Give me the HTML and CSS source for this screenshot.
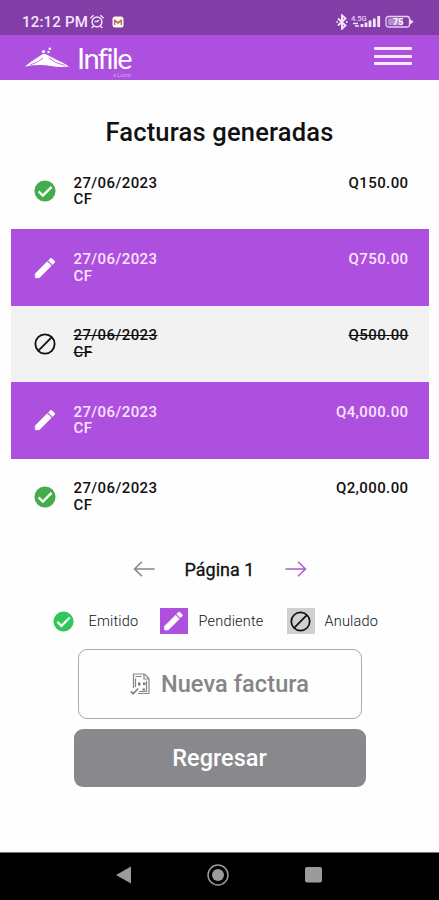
FILE: index.html
```html
<!DOCTYPE html>
<html lang="es">
<head>
    <meta charset="UTF-8">
    <meta name="viewport" content="width=device-width, initial-scale=1.0">
    <title>Facturas generadas</title>
    <link rel="stylesheet" href="styles.css">
</head>
<body>
    <!-- Shared icons -->
    <svg class="sprite" width="0" height="0">
        <symbol id="check" viewBox="0 0 24 24">
            <circle cx="12" cy="12" r="11.5" fill="currentColor"/>
            <path d="M5 12.4l4.7 4.6L19.2 7.5" fill="none" stroke="#fff" stroke-width="2.5"/>
        </symbol>
        <symbol id="pencil" viewBox="0 0 24 24">
            <path d="M3 17.25V21h3.75L17.81 9.94l-3.75-3.75L3 17.25zM20.71 7.04a1 1 0 0 0 0-1.41l-2.34-2.34a1 1 0 0 0-1.41 0l-1.83 1.83 3.75 3.75 1.83-1.83z" fill="currentColor" stroke="currentColor" stroke-width=".6"/>
        </symbol>
        <symbol id="ban" viewBox="0 0 24 24">
            <circle cx="12" cy="12" r="10.5" fill="none" stroke="currentColor" stroke-width="2"/>
            <path d="M4.8 19.2L19.2 4.8" stroke="currentColor" stroke-width="2"/>
        </symbol>
    </svg>

    <div class="status-bar">
        <span class="time">12:12 PM</span>
        <svg class="alarm" viewBox="0 0 16 16" width="16" height="15">
            <g fill="none" stroke="#f3e4fa" stroke-width="1.6">
                <circle cx="8" cy="8.5" r="5.2"/>
                <path d="M1 4.5L4.3 1.3M15 4.5L11.7 1.3M5.5 8h2.6l2-1.3M4 13l-1.5 2M12 13l1.5 2"/>
            </g>
        </svg>
        <svg class="mail" viewBox="0 0 12 12" width="12" height="12">
            <rect x=".5" y=".5" width="11" height="11" rx="2.5" fill="#fff5ee"/>
            <path d="M2.7 9V4" stroke="#5b8bd6" stroke-width="1.4"/>
            <path d="M9.3 9V4" stroke="#5aa564" stroke-width="1.4"/>
            <path d="M2.2 4L6 7l3.8-3" fill="none" stroke="#dc5a3c" stroke-width="1.6"/>
        </svg>
        <div class="status-right">
            <svg viewBox="0 0 12 16" width="12" height="16">
                <path d="M2 4.5l7.5 7L6 14.7V1.3l3.5 3.2L2 11.5M.5 8h1.3M10 8h1.5" fill="none" stroke="#f3e4fa" stroke-width="1.9"/>
            </svg>
            <svg class="signal" viewBox="0 0 30 15" width="30" height="15">
                <text x="0" y="6.5" class="network">4.5G</text>
                <path d="M2 9.5h5M4 12h4" stroke="#f3e4fa" stroke-width="1.5"/>
                <path d="M11 13v-3M15 13V8.5M19 13V6.5M23.3 13V4.5M27.7 13V2" stroke="#f3e4fa" stroke-width="2.8"/>
            </svg>
            <svg class="battery" viewBox="0 0 29 14" width="29" height="14">
                <rect x="1" y="1.5" width="23.5" height="10.5" rx="2.5" fill="none" stroke="#e9cff5" stroke-width="1.3"/>
                <rect x="3" y="3.3" width="15" height="7" rx="1" fill="#b98ad0"/>
                <path d="M25 4l3.5 2.8L25 9.6z" fill="#f3e4fa"/>
                <text x="8" y="10" class="level">75</text>
            </svg>
        </div>
    </div>

    <header class="navbar">
        <svg class="mountain" viewBox="0 0 44 21" width="44" height="21">
            <path d="M0 19.5Q5 15 11 11.5L17 7.5Q19 6.3 21 7.3L31 12.5Q39 16 44 19.5Q34 20.5 26 19Q14 17 0 19.5z" fill="#fff"/>
            <path d="M5 18Q14 15 18 11M24 11Q30 16.5 40 18.5" fill="none" stroke="#ae50df" stroke-width=".8"/>
            <circle cx="18.5" cy="4.5" r="1.6" fill="#fff"/>
            <circle cx="24.8" cy="1.8" r="1.3" fill="#fff"/>
            <circle cx="23.5" cy="5" r="1.2" fill="#fff"/>
        </svg>
        <div class="brand">
            <span class="brand-name">Infile</span>
            <span class="brand-sub">x Lucro</span>
        </div>
        <div class="menu">
            <span></span>
            <span></span>
            <span></span>
        </div>
    </header>

    <main>
        <h1>Facturas generadas</h1>

        <div class="list">
            <div class="row issued">
                <svg><use href="#check"/></svg>
                <div class="info">27/06/2023<br>CF</div>
                <div class="amount">Q150.00</div>
            </div>
            <div class="row pending">
                <svg><use href="#pencil"/></svg>
                <div class="info">27/06/2023<br>CF</div>
                <div class="amount">Q750.00</div>
            </div>
            <div class="row void">
                <svg><use href="#ban"/></svg>
                <div class="info">27/06/2023<br>CF</div>
                <div class="amount">Q500.00</div>
            </div>
            <div class="row pending">
                <svg><use href="#pencil"/></svg>
                <div class="info">27/06/2023<br>CF</div>
                <div class="amount">Q4,000.00</div>
            </div>
            <div class="row issued">
                <svg><use href="#check"/></svg>
                <div class="info">27/06/2023<br>CF</div>
                <div class="amount">Q2,000.00</div>
            </div>
        </div>

        <div class="pager">
            <svg class="prev" viewBox="0 0 22 16" width="22" height="16">
                <path d="M21.5 8H1.5M9 .8L1.5 8L9 15.2"/>
            </svg>
            <span>Página 1</span>
            <svg class="next" viewBox="0 0 22 16" width="22" height="16">
                <path d="M.5 8h20M13 .8L20.5 8L13 15.2"/>
            </svg>
        </div>

        <div class="legend">
            <div class="key key-issued"><svg><use href="#check"/></svg></div>
            <span class="emitido">Emitido</span>
            <div class="key key-pending"><svg><use href="#pencil"/></svg></div>
            <span class="pendiente">Pendiente</span>
            <div class="key key-void"><svg><use href="#ban"/></svg></div>
            <span class="anulado">Anulado</span>
        </div>

        <button class="btn new">
            <svg viewBox="0 0 20 22" width="20" height="22">
                <g fill="none" stroke="#858585" stroke-width="1.2">
                    <path d="M3.5 15V1h11l4.5 4.5V20.5H8"/>
                    <path d="M14 1v5h5M5.5 3.5h6M5.5 14V5.5M16.5 8v10.5H9"/>
                    <path d="M.8 18.3l2.4 2.4 5-5.2" stroke-width="1.7"/>
                </g>
                <path d="M8 9.5h2.5v3H8zM13 9.5h2.5V12H13zM12.5 15.5H15v2h-2.5z" fill="#777"/>
            </svg>
            <span>Nueva factura</span>
        </button>
        <button class="btn back"><span>Regresar</span></button>
    </main>

    <footer class="nav-keys">
        <svg viewBox="0 0 15 18" width="15" height="18"><path d="M0 9L15 .5v17z" fill="#9b9b9b"/></svg>
        <svg viewBox="0 0 22 22" width="22" height="22">
            <circle cx="11" cy="11" r="10" fill="none" stroke="#9b9b9b" stroke-width="1.5"/>
            <circle cx="11" cy="11" r="6" fill="#9b9b9b"/>
        </svg>
        <svg viewBox="0 0 17 16" width="17" height="16"><rect width="17" height="15.5" rx="2" fill="#9b9b9b"/></svg>
    </footer>
</body>
</html>
```
FILE: styles.css
```css
* {
    box-sizing: border-box;
}

body {
    margin: 0;
    height: 900px;
    display: flex;
    flex-direction: column;
    overflow: hidden;
    background: #fefefe;
    color: #111;
    font-family: Roboto, sans-serif;
}

svg {
    display: block;
    flex: none;
}

.sprite {
    position: absolute;
}

/* Phone status bar */
.status-bar {
    height: 35px;
    padding: 8px 25px 0 22px;
    display: flex;
    align-items: center;
    background: #833da7;
    color: #f3e4fa;
}

.time {
    width: 67px;
    font-size: 15px;
    font-weight: 500;
    letter-spacing: 0.2px;
    white-space: nowrap;
}

.mail {
    margin-left: 7px;
}

.status-right {
    margin-left: auto;
    display: flex;
    align-items: center;
    gap: 3px;
}

.battery {
    margin-left: 1px;
}

.network {
    font-size: 7.5px;
    font-weight: 500;
    fill: #e9cff5;
}

.level {
    font-size: 9px;
    font-weight: 700;
    fill: #fff;
}

/* Header */
.navbar {
    height: 45px;
    padding: 0 27px 0 25px;
    display: flex;
    align-items: flex-start;
    background: #ae50df;
    color: #fff;
}

.mountain {
    margin-top: 12px;
}

.brand {
    margin: 10px 0 0 8px;
    width: 54px;
    display: flex;
    flex-direction: column;
}

.brand-name {
    font-family: Lato, sans-serif;
    font-size: 29px;
    font-weight: 400;
    line-height: 25px;
    letter-spacing: -1.5px;
}

.brand-sub {
    margin-top: 2px;
    align-self: flex-end;
    font-size: 5.5px;
    line-height: 6px;
    color: #d9a8f0;
}

.menu {
    margin: 12px 0 0 auto;
    width: 38px;
    display: flex;
    flex-direction: column;
    gap: 4.5px;
}

.menu span {
    height: 3px;
    border-radius: 1px;
    background: #fbeaff;
}

/* Content */
main {
    flex: 1;
    display: flex;
    flex-direction: column;
    align-items: center;
}

h1 {
    margin: 37px 0 0;
    height: 36px;
    font-size: 25.5px;
    font-weight: 500;
    line-height: 31px;
    letter-spacing: 0.2px;
}

.list {
    width: 418px;
    margin: 0 10px 0 11px;
}

.row {
    height: 76.4px;
    padding: 0 20.5px 0 22px;
    display: flex;
    align-items: center;
    font-size: 15px;
    font-weight: 500;
    line-height: 16.5px;
    letter-spacing: 0.4px;
}

.row svg {
    width: 24px;
    height: 22px;
}

.info {
    margin-left: 16.5px;
}

.amount {
    margin-left: auto;
    align-self: flex-start;
    padding-top: 21.7px;
}

.issued svg {
    color: #43ad4b;
}

.pending {
    background: #ae50df;
    color: #fbe4ff;
}

.row.pending svg {
    width: 28px;
    height: 26px;
    margin: 0 -2px;
    color: #fff;
}

.void {
    background: #f2f2f2;
    text-decoration: line-through;
}

.pager {
    height: 69px;
    display: flex;
    align-items: center;
    font-size: 18px;
    font-weight: 400;
    -webkit-text-stroke: 0.3px #111;
}

.pager path {
    fill: none;
    stroke: currentColor;
    stroke-width: 1.5;
}

.pager span {
    width: 71px;
    margin: 0 29px 0 30px;
    white-space: nowrap;
}

.prev {
    color: #858585;
}

.next {
    color: #ac5ad0;
}

.legend {
    width: 331px;
    height: 35px;
    margin-right: 5px;
    display: flex;
    align-items: center;
    font-size: 14.5px;
    font-weight: 300;
    letter-spacing: 0.2px;
    white-space: nowrap;
}

.key {
    width: 28px;
    height: 26px;
    display: flex;
    align-items: center;
    justify-content: center;
}

.key svg {
    width: 23px;
    height: 21px;
}

.key-issued {
    width: 23px;
    color: #2fc65a;
}

.key-pending {
    background: #ae50df;
    color: #fff;
}

.key-pending svg {
    width: 27px;
    height: 24px;
}

.key-void {
    background: #d0d0d0;
    color: #111;
}

.emitido {
    width: 71px;
    margin-left: 14px;
}

.pendiente {
    width: 88px;
    margin-left: 11px;
}

.anulado {
    margin-left: 10px;
}

.btn {
    display: flex;
    align-items: center;
    justify-content: center;
    padding: 0;
    border: 0;
    border-radius: 9px;
    font-family: inherit;
    font-weight: 500;
    font-size: 23.5px;
}

.new {
    width: 284px;
    height: 70px;
    margin-top: 10.5px;
    gap: 11px;
    border: 1.5px solid #aaa;
    background: #fefefe;
    color: #858585;
    letter-spacing: 0.1px;
}

.back {
    width: 292px;
    height: 58px;
    margin-top: 10px;
    background: #89888c;
    color: #fff;
}

/* Android keys */
.nav-keys {
    height: 48px;
    padding: 0 117px 3px 116px;
    display: flex;
    align-items: center;
    justify-content: space-between;
    border-top: 1px solid #777;
    background: #000;
}
```
